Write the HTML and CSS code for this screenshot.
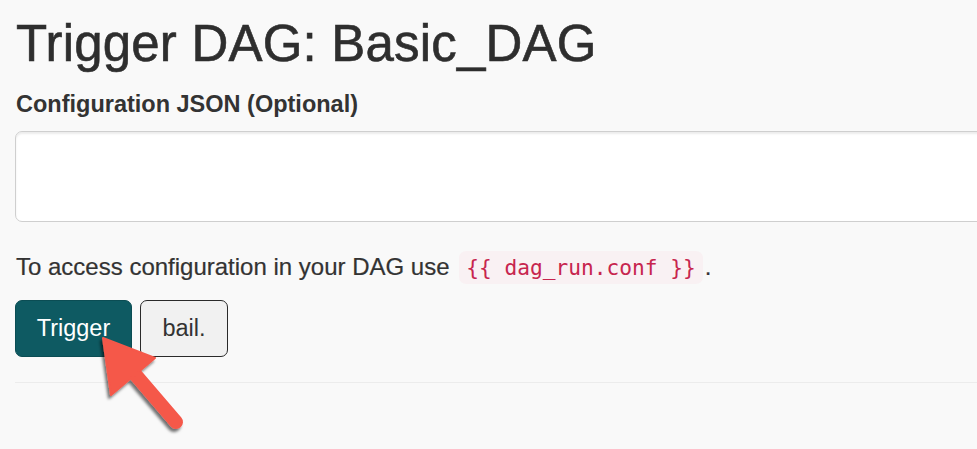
FILE: index.html
```html
<!DOCTYPE html>
<html lang="en">
<head>
<meta charset="utf-8">
<title>Trigger DAG: Basic_DAG</title>
<link rel="stylesheet" href="styles.css">
</head>
<body>
<main class="page">
  <h1 class="title">Trigger DAG: Basic_DAG</h1>
  <form class="trigger-form">
    <label class="field-label" for="conf">Configuration JSON (Optional)</label>
    <textarea class="conf-input" id="conf"></textarea>
    <p class="hint">To access configuration in your DAG use <code class="code">{{ dag_run.conf }}</code>.</p>
    <div class="actions">
      <button type="button" class="btn btn-primary">Trigger</button>
      <button type="button" class="btn btn-default">bail.</button>
    </div>
  </form>
  <hr class="divider">
</main>
<svg class="annotation-arrow" width="977" height="449" viewBox="0 0 977 449" aria-hidden="true">
  <defs>
    <filter id="shadow" x="-20%" y="-20%" width="140%" height="140%">
      <feDropShadow dx="-2" dy="3" stdDeviation="1.6" flood-color="#000" flood-opacity="0.55"/>
    </filter>
  </defs>
  <g filter="url(#shadow)" fill="#f5584a" stroke="#f5584a">
    <line x1="176" y1="422" x2="128" y2="366" stroke-width="14" stroke-linecap="round"/>
    <polygon points="103,338 111,395 155,358" stroke-width="2" stroke-linejoin="round"/>
  </g>
</svg>
</body>
</html>
```
FILE: styles.css
```css
* { box-sizing: border-box; }
html, body {
  margin: 0;
  padding: 0;
  background: #f9f9f9;
  overflow: hidden;
}
body {
  width: 977px;
  height: 449px;
  position: relative;
  font-family: "Liberation Sans", Arial, Helvetica, sans-serif;
  color: #333;
  font-size: 24px;
  line-height: 33.6px;
}
.page {
  padding-left: 15px;
  overflow: hidden;
}
.title {
  margin: 16px 0 0 1px;
  font-size: 51px;
  line-height: 56px;
  font-weight: 400;
  letter-spacing: 0.2px;
  color: #2e2e2e;
  -webkit-text-stroke: 0.6px #2e2e2e;
}
.trigger-form {
  margin: 0;
}
.field-label {
  display: block;
  margin: 16px 0 9px 1px;
  font-weight: 700;
  font-size: 23.5px;
}
.conf-input {
  display: block;
  width: calc(100% + 40px);
  height: 91px;
  margin: 0;
  border: 1.5px solid #cfcfcf;
  border-radius: 7px;
  background: #fff;
  box-shadow: inset 0 2px 2px rgba(0, 0, 0, 0.075);
  resize: none;
  font: inherit;
}
.hint {
  margin: 28px 0 0 1px;
  -webkit-text-stroke: 0.2px #333;
}
.code {
  font-family: "DejaVu Sans Mono", "Liberation Mono", monospace;
  font-size: 21.2px;
  color: #c7254e;
  background: #f9f1f3;
  padding: 4px 7px;
  border-radius: 7px;
  margin-left: 3px;
  margin-right: 2px;
  -webkit-text-stroke: 0;
}
.actions {
  display: flex;
  gap: 8px;
  margin-top: 16px;
}
.btn {
  height: 57px;
  padding: 0;
  border-radius: 7px;
  font-family: inherit;
  font-size: 23.5px;
  line-height: 1;
  cursor: pointer;
}
.btn-primary {
  background: #0e5a62;
  border: 1.5px solid #0b4d54;
  color: #fff;
  width: 117px;
}
.btn-default {
  background: #f1f1f1;
  border: 1.5px solid #2a2a2a;
  color: #333;
  width: 88px;
}
.divider {
  margin: 25px 0 0 0;
  border: 0;
  border-top: 1.5px solid #ececec;
}
.annotation-arrow {
  position: absolute;
  left: 0;
  top: 0;
  pointer-events: none;
}
```
